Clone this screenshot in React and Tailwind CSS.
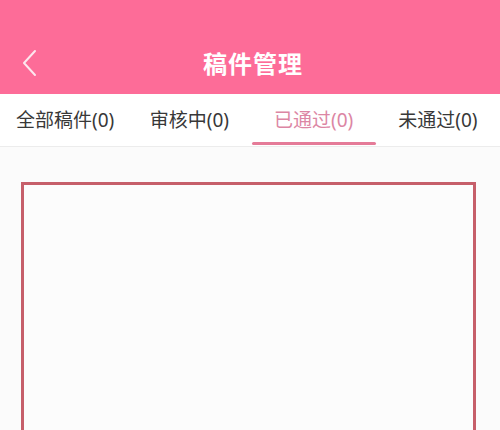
import React from "react";

const tabs = ["全部稿件(0)", "审核中(0)", "已通过(0)", "未通过(0)"];
const active = 2;

export default function App() {
  return (
    <div
      className="w-[500px] h-[430px] overflow-hidden bg-[#fbfbfb] flex flex-col"
      style={{ fontFamily: '"Noto Sans", "Noto Sans CJK SC", sans-serif' }}
    >
      {/* top bar */}
      <div className="h-[94px] bg-[#fd6c98] flex items-end shrink-0">
        <div className="h-[60px] w-full relative flex items-center justify-center pl-[6px]">
          <svg
            className="absolute left-[20px] top-[15px]"
            width="18"
            height="28"
            viewBox="0 0 18 28"
            fill="none"
            stroke="#fde7ee"
            strokeWidth="2"
            strokeLinecap="round"
            strokeLinejoin="round"
          >
            <path d="M15 2 L4 14 L15 26" />
          </svg>
          <span className="text-white text-[24px] font-bold tracking-[1px]">稿件管理</span>
        </div>
      </div>

      {/* status tabs */}
      <div className="h-[53px] bg-white border-b border-[#ececec] flex pl-[3px] shrink-0">
        {tabs.map((t, i) => (
          <div key={t} className="w-[125px] relative flex items-center justify-center">
            <span
              className={
                "text-[19px] " + (i === active ? "text-[#dc86a4]" : "text-[#383838]")
              }
            >
              {t}
            </span>
            {i === active && (
              <div className="absolute left-0 right-0 bottom-[1px] h-[3px] bg-[#e57b98] rounded-full" />
            )}
          </div>
        ))}
      </div>

      {/* content */}
      <div className="flex-1 pt-[35px] px-[21px]">
        <div className="h-[400px] w-[455px] border-[3px] border-[#c65f6a] bg-[#fcfcfc]" />
      </div>
    </div>
  );
}
